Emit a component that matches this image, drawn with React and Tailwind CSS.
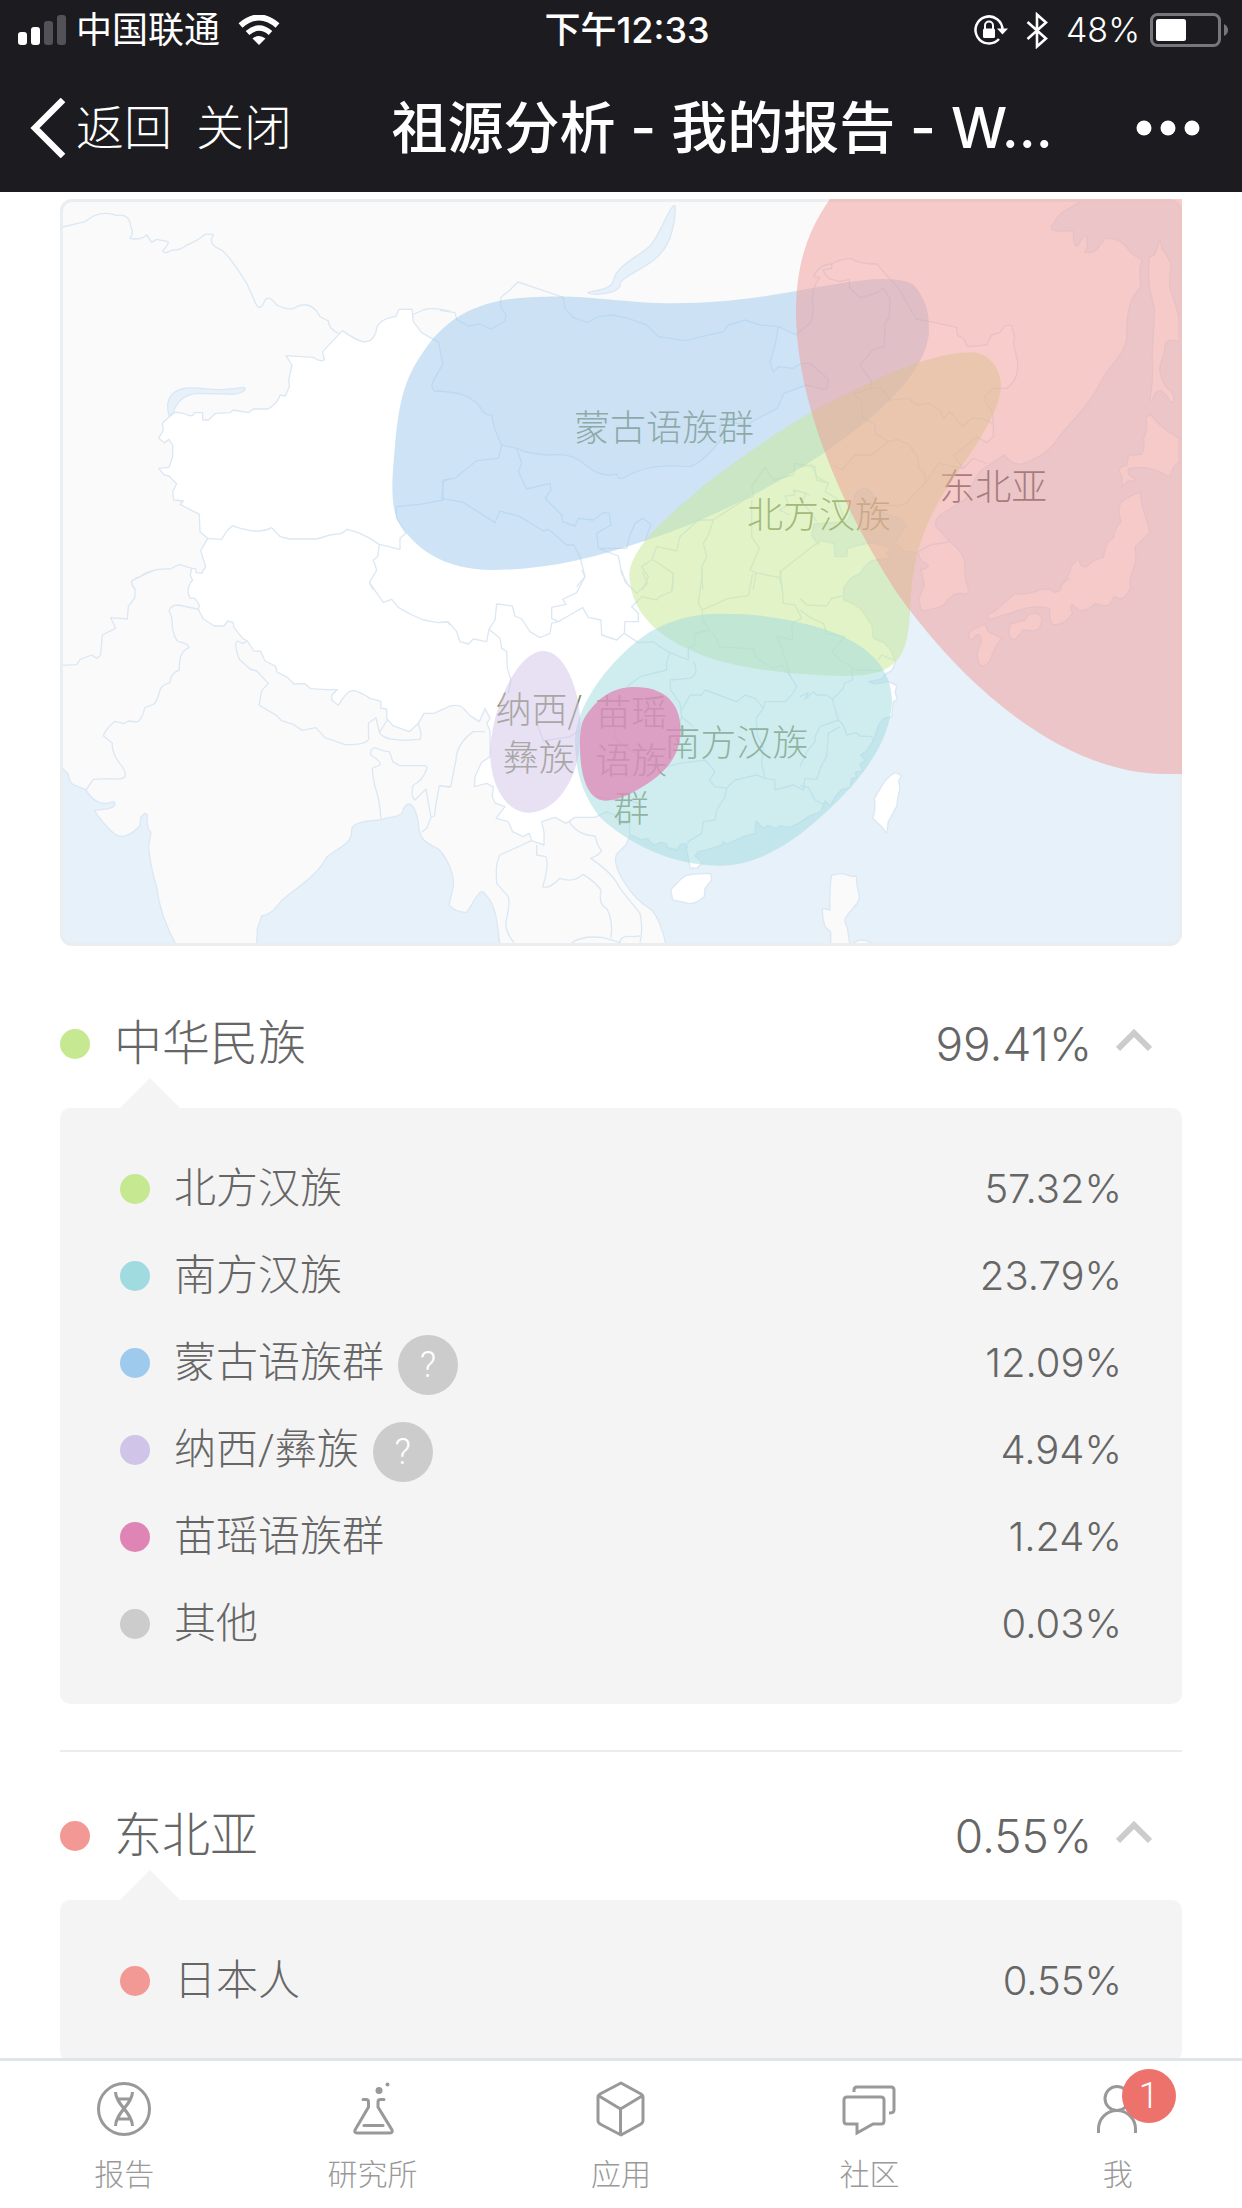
import React, { useState } from 'react';

const groups = [
  {
    id: 'china',
    name: '中华民族',
    percent: '99.41%',
    dot: 'bg-[#c6e891]',
    items: [
      { name: '北方汉族', percent: '57.32%', dot: 'bg-[#c6e891]' },
      { name: '南方汉族', percent: '23.79%', dot: 'bg-[#a0dcdf]' },
      { name: '蒙古语族群', percent: '12.09%', dot: 'bg-[#9ecaee]', help: true },
      { name: '纳西/彝族', percent: '4.94%', dot: 'bg-[#d0c4e8]', help: true },
      { name: '苗瑶语族群', percent: '1.24%', dot: 'bg-[#df85b5]' },
      { name: '其他', percent: '0.03%', dot: 'bg-[#cccccc]' },
    ],
  },
  {
    id: 'northeast-asia',
    name: '东北亚',
    percent: '0.55%',
    dot: 'bg-[#f29996]',
    items: [{ name: '日本人', percent: '0.55%', dot: 'bg-[#f29996]' }],
  },
];

// China's coast from the Vietnam border up to Liaodong, shared by the land and the China shapes
const COAST =
  'L1710 1908 L1724 1912 L1745 1923 L1762 1918 L1780 1938 L1800 1930 L1818 1933 L1822 1945 L1850 1953 L1862 1936 L1875 1933 L1882 1960 L1888 1993 L1890 2006 L1910 2008 L1920 1998 L1926 1990 L1905 1971 L1915 1958 L1940 1953 L1985 1938 L1990 1928 L2000 1935 L2050 1913 L2085 1903 L2088 1866 L2110 1888 L2124 1880 L2150 1888 L2160 1880 L2190 1885 L2220 1870 L2250 1850 L2282 1838 L2295 1805 L2310 1820 L2328 1790 L2345 1772 L2372 1765 L2374 1738 L2390 1735 L2386 1720 L2408 1715 L2400 1695 L2416 1685 L2402 1668 L2420 1655 L2440 1625 L2455 1580 L2468 1560 L2495 1553 L2500 1508 L2512 1501 L2505 1480 L2510 1460 L2485 1448 L2445 1455 L2425 1448 L2465 1440 L2475 1425 L2495 1415 L2507 1388 L2490 1350 L2470 1330 L2440 1318 L2436 1280 L2405 1233 Q2390 1218 2350 1202 L2352 1165 L2372 1138 L2400 1123 Q2425 1080 2450 1083 L2490 1078 L2480 1062 L2492 1048 Q2440 1025 2400 1038 L2362 1048 L2360 1073 L2325 1073 L2322 1034 L2280 1024 L2275 1036 L2255 1010 L2262 975 Q2330 970 2360 968 C2385 930 2370 890 2400 872 Q2425 855 2445 903 L2440 925';

const LAND =
  'M0 1700 L24 1724 Q28 1750 40 1757 L77 1772 Q105 1818 140 1813 L162 1808 Q170 1822 150 1828 L103 1835 Q125 1870 160 1902 Q192 1930 240 1880 L242 1855 Q258 1835 262 1850 Q258 1885 273 1900 L266 1943 Q270 2000 290 2065 Q300 2150 350 2241 L590 2241 L592 2190 L605 2151 C640 2145 650 2120 670 2100 C720 2060 770 2030 800 1975 C830 1945 878 1940 875 1890 C880 1868 930 1865 960 1863 C990 1850 1025 1860 1030 1830 C1045 1800 1065 1815 1075 1870 C1075 1930 1110 1935 1135 1950 C1165 1980 1190 2040 1177 2075 L1167 2118 Q1185 2140 1220 2140 C1240 2110 1260 2070 1270 2079 C1310 2120 1310 2160 1320 2241 L1818 2241 C1810 2190 1790 2150 1775 2133 C1720 2100 1700 2060 1690 2045 C1660 2000 1665 1970 1672 1963 L1698 1938 ' +
  COAST +
  ' Q2470 945 2520 958 Q2540 975 2537 983 L2505 1033 L2535 1058 L2575 1060 Q2578 1080 2586 1086 L2605 1098 Q2605 1108 2582 1113 Q2590 1140 2593 1158 L2577 1198 L2583 1235 Q2620 1232 2650 1218 Q2680 1180 2700 1183 Q2730 1190 2725 1170 Q2712 1130 2715 1093 Q2710 1060 2675 1033 L2630 985 Q2620 970 2640 948 L2720 898 Q2750 815 2780 803 L2832 768 Q2860 800 2885 795 C2960 770 2980 740 3000 710 C3060 640 3100 600 3125 543 C3160 490 3195 460 3200 420 C3200 330 3210 300 3242 263 L3240 205 Q3250 185 3242 180 C3190 160 3210 115 3130 118 Q3135 130 3120 135 Q3110 165 3075 160 L3082 145 L3080 108 Q3060 120 3055 138 Q3040 150 3040 95 C3000 98 2950 100 2985 68 C3000 30 3040 30 3070 0 L0 0 Z';

const CHINA =
  'M328 653 L307 673 L310 693 L296 718 L313 731 L327 721 L338 738 V773 L327 805 L296 808 L313 828 L327 831 L350 855 L338 878 L341 903 L370 906 L360 916 L418 946 L420 998 L443 1018 L422 1055 L437 1103 L425 1123 L408 1121 L407 1109 L395 1108 L391 1130 L398 1143 Q375 1170 390 1197 L405 1198 L418 1218 L415 1231 L430 1260 L463 1281 H492 L503 1266 L519 1270 L522 1285 L548 1318 L562 1326 L582 1356 L602 1357 L615 1386 L646 1401 L651 1419 L682 1435 L702 1455 L735 1454 L752 1469 L800 1472 L832 1472 L815 1488 V1502 L835 1519 Q860 1475 880 1474 Q900 1478 930 1498 L963 1507 L962 1527 L980 1530 V1558 L998 1580 L1048 1598 L1075 1573 L1092 1543 H1122 L1170 1521 Q1200 1515 1212 1530 L1230 1550 L1258 1568 L1275 1528 L1290 1558 L1280 1573 L1290 1595 L1290 1673 L1265 1690 L1245 1733 L1243 1763 L1280 1753 L1300 1763 L1297 1793 L1305 1812 L1335 1823 L1308 1858 L1345 1868 L1358 1898 L1390 1913 L1408 1903 L1415 1925 L1452 1938 L1452 1900 L1445 1868 L1485 1855 L1518 1873 L1545 1855 L1605 1855 L1640 1838 L1665 1848 L1680 1873 L1708 1873 ' +
  COAST +
  ' L2485 918 Q2540 925 2545 903 L2595 853 L2635 793 L2710 808 L2680 770 L2750 713 L2780 731 L2800 713 L2800 673 L2795 633 Q2770 610 2775 590 L2800 568 H2840 Q2880 540 2872 483 L2860 433 L2864 415 L2855 379 H2835 L2820 400 L2795 408 L2780 438 L2722 443 L2712 420 L2692 408 L2690 385 L2610 368 L2568 360 L2520 275 L2450 195 Q2400 195 2370 178 Q2340 180 2315 195 Q2280 195 2260 233 L2280 235 Q2250 270 2260 330 L2255 368 L2208 408 L2155 383 L2145 440 L2130 490 L2140 518 L2155 503 L2200 508 Q2220 490 2250 493 L2305 540 Q2305 575 2290 571 L2240 558 L2172 583 L2152 628 L2085 663 L2060 680 L1990 663 Q1970 690 1985 720 Q1920 800 1885 803 C1800 795 1740 805 1690 838 L1675 838 L1670 825 Q1640 835 1600 815 C1560 785 1540 760 1470 768 Q1400 765 1370 748 L1325 738 Q1300 690 1295 648 Q1270 650 1258 620 C1220 585 1200 580 1123 576 Q1110 565 1120 545 L1148 496 L1136 430 L1085 401 L1060 368 L1056 331 H1017 L1007 353 Q950 360 948 400 C930 450 890 425 847 395 L788 458 L793 483 Q780 490 760 475 L678 470 L696 498 L686 543 L688 563 L676 591 L660 588 Q655 610 625 630 H580 L565 641 L520 633 L510 641 L467 643 L445 663 L428 663 V641 H403 L398 650 L388 650 Q365 640 345 640 Z';

function OriginMap() {
  return (
    <svg viewBox="0 0 3366 2241" className="block w-full" role="img" aria-label="祖源分布">
      <defs>
        <clipPath id="frame">
          <rect width="3366" height="2241" rx="36" />
        </clipPath>
      </defs>
      <g clipPath="url(#frame)" stroke="#dbe8f4" strokeWidth="4" strokeLinejoin="round">
        <rect width="3366" height="2241" fill="#e6f1fa" stroke="none" />
        <path d={LAND} fill="#fafafa" />
        <path d={CHINA} fill="#ffffff" />

        {/* islands */}
        <g fill="#fafafa">
          <path d="M3300 118 L3306 150 Q3330 180 3334 200 Q3325 240 3332 275 Q3350 320 3357 358 V428 Q3320 415 3315 440 C3315 480 3295 490 3300 520 C3310 560 3325 570 3335 578 Q3350 615 3330 608 Q3300 550 3280 595 Q3275 615 3270 600 C3275 560 3282 540 3276 470 L3284 330 C3270 280 3262 260 3268 172 Q3285 175 3290 150 Z" />
          <path d="M3270 645 Q3300 685 3357 718 V793 Q3340 795 3332 830 L3325 833 Q3270 795 3205 810 Q3200 830 3228 840 Q3225 850 3205 845 L3185 863 Q3190 830 3178 820 Q3175 800 3200 800 L3205 770 L3245 765 Q3255 745 3250 720 Q3265 690 3257 658 Z" />
          <path d="M3240 878 C3250 960 3270 970 3268 1003 L3225 1043 Q3230 1080 3225 1095 Q3205 1150 3212 1165 C3200 1200 3180 1205 3162 1193 Q3150 1225 3130 1220 L3105 1213 Q3065 1255 3040 1218 Q3025 1215 3038 1243 Q3010 1285 2975 1275 Q2965 1250 2970 1228 Q2920 1215 2860 1240 L2785 1263 Q2780 1240 2800 1240 L2865 1183 Q2900 1190 2940 1172 L2972 1170 Q2985 1190 3003 1170 Q3000 1155 3028 1138 L3003 1158 Q3030 1130 3033 1105 Q3045 1085 3060 1081 Q3055 1105 3080 1103 Q3100 1080 3130 1075 Q3140 1020 3160 1018 Q3165 980 3183 968 C3160 900 3200 900 3240 878 Z" />
          <path d="M2925 1243 Q2955 1245 2940 1285 Q2930 1300 2890 1293 L2865 1323 Q2840 1320 2850 1275 L2895 1263 Q2900 1245 2925 1243 Z" />
          <path d="M2775 1275 L2785 1298 L2825 1318 Q2800 1350 2795 1373 Q2775 1420 2755 1390 Q2745 1360 2763 1333 C2765 1300 2750 1300 2735 1325 Q2715 1310 2735 1293 Z" />
          <path d="M2315 2028 L2345 2023 L2375 2032 L2390 2031 C2385 2070 2410 2090 2390 2115 C2360 2150 2345 2160 2362 2185 L2370 2241 H2312 V2198 L2295 2183 Q2285 2150 2288 2128 L2310 2133 Q2308 2060 2315 2028 Z" />
          <path d="M2372 2241 Q2405 2205 2445 2241 Z" />
        </g>
        <g fill="#ffffff">
          <path d="M2508 1721 L2525 1730 L2516 1745 L2520 1768 Q2512 1800 2510 1823 L2485 1868 L2480 1903 L2465 1883 L2438 1858 Q2448 1830 2443 1798 L2470 1753 Q2490 1725 2508 1721 Z" />
          <path d="M1865 2038 L1878 2030 L1900 2025 L1952 2023 L1955 2043 L1935 2068 L1933 2093 Q1900 2120 1880 2112 L1838 2103 L1832 2073 Z" />
        </g>

        {/* lakes */}
        <g fill="#e6f1fa">
          <path d="M328 653 C315 610 325 575 380 567 C450 565 450 580 550 565 Q565 570 540 582 Q525 588 500 585 L410 583 Q355 590 340 640 Z" />
          <path d="M1845 20 C1830 15 1800 110 1770 140 S1670 200 1662 240 S1590 272 1583 282 C1600 290 1670 285 1680 262 C1670 235 1780 200 1800 165 C1835 130 1848 60 1845 20 Z" />
        </g>

        <g fill="none">
          {/* central asia */}
          <g transform="translate(-30 -27)">
            <path d="M38 111 L105 95 L130 78 Q160 63 200 76 Q240 70 242 110 Q253 125 240 145 Q270 152 290 135 L305 157 L320 148 L355 155 Q355 165 338 182 Q345 195 365 180 Q390 182 410 165 Q440 155 465 133 Q500 130 487 140 Q475 165 515 180 C545 205 560 235 590 280 L615 335 Q628 370 643 335 Q655 310 680 345 Q720 365 740 350 Q785 330 810 380 L835 393 Q835 415 865 430" />
            <path d="M1086 375 L1120 360 Q1150 350 1200 364" />
            <path d="M470 1045 L515 1048 L530 1023 L547 1007 Q580 1020 620 1024 Q650 1022 665 1013 L690 1040 L720 1047 L800 1047 L840 1035 L875 1030 L892 1018 L925 1028 L960 1045 L988 1063 L1050 1078 L1050 1045 L1068 1030 L1040 985 L1038 950 L1110 943 L1180 930 L1178 875 L1200 866" />
            <path d="M988 1063 L983 1100 L970 1110 L980 1140 L958 1178 L970 1200" />
            <path d="M425 1135 L388 1123 L360 1137 Q300 1135 270 1160 Q240 1170 245 1182 L256 1200" />
          </g>
          {/* mongolia and the northern provinces */}
          <g transform="translate(1140 -27)">
            <path d="M0 361 L45 368 L50 388 L85 408 L120 402 L152 417 L195 395 L198 375 L182 350 L183 322 L210 300 L233 276 L300 298 L370 322 L375 355 L400 383 L443 397 L475 380 L520 375 L565 385 L620 405 L655 440 L735 452 L850 425 L865 405 L915 390 L960 405 L1015 410" />
            <path d="M185 765 L175 805 L110 812 L45 865 L10 870 L5 925 L70 937 L165 998 L180 963 L240 980 L310 1023 L325 1018 L380 1065 L402 1065 L420 1100 L435 1160 L410 1190" />
            <path d="M230 775 L245 820 L235 845 L260 897 L330 880 L333 900 L315 925 L365 975 L368 995 L405 1008 L415 985 L460 990 L490 968 L508 970 L513 1005 L470 1030 L475 1075 L560 1075 L568 1040 L585 1000 L608 985 L633 1003 L615 1052" />
            <path d="M475 1075 L535 1098 L545 1150 L568 1190" />
            <path d="M650 1070 L710 1083 L720 1040 L775 990 L820 990 L850 970 L920 925 L940 920 L935 890 L975 832 L1000 870 L1060 855 L1065 820 L1125 830 L1130 870 L1160 878" />
            <path d="M650 1070 L635 1110 L605 1130 L625 1160 L608 1200 M640 1110 L700 1150 L698 1200" />
            <path d="M820 990 L805 1035 L790 1060 L800 1100 L785 1130 L788 1200" />
            <path d="M935 930 L935 1040 L958 1075 L930 1140 L948 1148 L940 1200 M948 1148 L1018 1163 L1027 1140 L1130 1060 M1018 1163 L1028 1200" />
            <path d="M1060 900 L1100 910 L1085 935 L1115 970 L1130 995 M1060 900 L1065 915 L1035 918 L1045 945 L1018 960 L1050 975" />
          </g>
          {/* manchuria */}
          <g transform="translate(2220 -27)">
            <path d="M95 222 L95 235 L68 240 L85 265 L120 275 L148 268 L148 292 L180 323 L225 310 L250 295 L270 325 L268 380 L255 400 L253 470 L220 478 L180 525 L215 575 L213 595 L160 612 L187 635 L187 680 L225 705 L225 730 L265 755 L215 795 L165 795 L125 840 L100 825" />
            <path d="M213 595 L245 595 L270 630 L325 625 L350 645 L385 640 L420 660 L430 685 L450 665 L488 710 L515 685 L545 685 L578 700" />
            <path d="M265 755 L290 748 L325 762 L355 805 L355 835 L375 850 L375 880" />
            <path d="M490 835 L520 805 L560 820 M355 1085 L390 1065 L450 1055" />
            <path d="M0 830 L35 825 L50 860 L85 880 L75 905 L110 925 L130 980 M0 905 L30 915" />
          </g>
          {/* south asia */}
          <g transform="translate(-30 1113)">
            <path d="M315 0 L275 18 L246 32 Q243 45 255 58 V82 L235 110 L232 147 L182 143 L197 175 L157 195 L152 255 L140 265 L125 255 L90 268 L80 284 L38 286" />
            <path d="M445 118 Q410 110 385 105 Q360 105 357 124 Q367 135 367 170 Q372 205 385 215 Q415 220 417 233 Q385 245 388 300 Q360 310 360 338 Q335 345 330 360 Q320 400 310 403 L285 413 Q275 450 262 456 L235 453 L222 461 L195 454 Q165 480 160 497 L187 520 Q185 545 205 575 Q235 610 222 623 Q210 630 180 626 L130 628 L108 660" />
            <path d="M592 213 L578 220 L562 213 Q550 220 568 268 L600 297 L620 303 L655 340 L635 362 L627 405 L680 437 L695 452 L730 463 L757 481 L797 473 L825 503 L885 524 Q950 525 956 507 L955 460 L978 443 L988 487 L1012 450" />
            <path d="M988 487 Q995 500 1020 507 L1060 511 L1110 508 Q1118 495 1105 463" />
            <path d="M993 748 Q990 690 975 650 Q965 600 968 594 L990 585 Q995 575 962 555 Q960 535 975 533 Q1000 545 1018 545 Q1025 560 1028 575 L1048 587 H1125 Q1135 590 1128 602 Q1115 635 1090 645 Q1080 680 1095 690 L1128 657 L1143 742 L1153 738 L1160 690 L1168 647 L1200 652" />
            <path d="M1143 742 L1130 775 L1115 787" />
            <path d="M958 38 L1000 97 L1025 88 L1045 112 L1080 132 L1120 150 L1165 158 L1192 155 L1200 165" />
          </g>
          {/* southwest china and indochina */}
          <g transform="translate(1140 1113)">
            <path d="M0 158 L25 155 L50 185 L60 215 L85 222 L100 207 L140 215 L147 178 L165 150 L170 102 L217 108 L225 138 L245 147 L270 185 L300 203 L330 190 L335 160 L355 155 L335 145 L335 112 L378 103 L368 88 L410 68 L435 20 L425 0" />
            <path d="M355 155 L395 132 L428 113 L445 142 L483 150 L485 195 L530 210 L553 190 L555 155 L595 155 L595 130 L575 110 L605 80 L650 90 L658 80 L695 65 L700 10" />
            <path d="M545 0 L555 35 L590 70 L623 40 L608 5" />
            <path d="M147 178 L180 205 L185 235 L200 245 L202 295 L213 330 L205 370" />
            <path d="M290 455 L310 513 L390 500 L420 480" />
            <path d="M553 190 L595 218 L640 215 L660 230 L690 248 L745 270 L745 235 L765 225 L763 192 L808 180 L788 150 L787 120 L775 100 L788 0" />
            <path d="M787 120 L865 85 L925 77 L938 10 M760 275 Q780 310 750 325 L690 330 L692 360 L720 400 L725 440 L715 480" />
            <path d="M690 248 L680 275 L680 300 L600 320 L560 350" />
            <path d="M808 180 L830 205 L838 230 L940 237 L950 265 L1000 295 L1025 285 L1052 320 L1070 350 L1055 375 L1035 395 L975 395 L970 415 L945 385 L915 375 L890 395 L795 360 L785 375 L750 375 L725 420" />
            <path d="M1052 320 L1025 230 L1010 200 L1058 210 L1055 160 L1085 145 L1065 105 L1030 100 L1028 70 L1020 0" />
            <path d="M970 415 L948 445 L953 500 L970 530 L965 580 L975 625 L1005 630 L1005 660 L1060 645 L1090 660 L1095 625 L1130 628 L1145 585 L1160 560 L1165 490 L1200 470" />
            <path d="M725 440 L760 470 M530 470 L520 500 L555 530 L600 560 L680 590 L720 580 L795 570 L825 605 L808 630 L825 650 L860 655 L885 630 L950 615 L975 625" />
            <path d="M860 655 L855 680 L830 720 L825 750 L790 755 L785 790 L745 815 L740 835" />
            <path d="M470 680 L520 690 L560 690 L600 700" />
            <path d="M135 485 L100 485 Q50 520 48 570 L32 650 L0 648" />
            <path d="M275 812 L180 855 Q165 880 170 940 L205 980 Q210 1000 200 1045 Q190 1080 222 1118" />
            <path d="M290 825 V855 L318 860 Q328 890 308 950 Q325 960 360 925 Q400 940 430 913 Q470 940 483 960 Q475 1005 500 1015 Q520 1050 513 1105" />
            <path d="M388 755 Q410 795 465 798 Q475 835 485 840 Q480 855 452 865 Q520 910 540 955 L600 1030 Q610 1080 600 1118" />
            <path d="M395 1118 Q430 1095 490 1103 L540 1118 Q540 1095 580 1100 L600 1098" />
          </g>
          {/* east coast provinces */}
          <g transform="translate(2220 1113)">
            <path d="M0 85 L20 105 L80 108 L95 85 L130 78 M0 120 L35 145 L70 160 L80 190 L135 200 L120 215 L95 245 L120 270 L155 290 L165 300 L205 300 L245 303 M235 270 L245 255 L285 272" />
            <path d="M155 295 L158 330 L132 340 L130 355 L97 388 L80 375 L50 375 L40 365 L15 388 L25 368 L0 380" />
            <path d="M97 388 L115 450 L60 470 L45 500 L45 515 L20 545 L0 590 M115 450 L130 465 L140 495 L170 488 L180 498 L215 500 L220 510" />
            <path d="M0 647 L25 652 L45 690 L75 705" />
          </g>
        </g>
      </g>
      <rect x="4.5" y="4.5" width="3357" height="2232" rx="33" fill="none" stroke="#eaeef1" strokeWidth="9" />

      <g fill="#7f8a62" fontSize="108" fontWeight="300" textAnchor="middle" className="font-['Noto_Sans_CJK_SC',sans-serif]">
        <text x="1812" y="726">蒙古语族群</text>
        <text x="2277" y="987">北方汉族</text>
        <text x="2800" y="902" fill="#5a5f62">东北亚</text>
        <text x="2029" y="1670">南方汉族</text>
        <text x="1436" y="1573">纳西/</text>
        <text x="1436" y="1717">彝族</text>
        <text x="1714" y="1582">苗瑶</text>
        <text x="1714" y="1726">语族</text>
        <text x="1714" y="1870">群</text>
      </g>

      {/* ancestry regions */}
      <path fill="#9ecaee" fillOpacity="0.5" d="M1460 293 C1600 290 1700 313 1840 313 C2100 313 2250 258 2440 241 Q2535 236 2565 262 C2605 315 2607 350 2607 400 C2600 500 2500 620 2290 763 C2100 890 1900 980 1755 1025 C1600 1078 1450 1113 1300 1113 C1150 1113 1060 1050 1010 958 C990 900 997 830 1005 740 C1020 570 1045 520 1110 430 C1190 330 1300 293 1460 293 Z" />
      <path fill="#c6e891" fillOpacity="0.5" d="M1708 1123 Q1710 1085 1755 1025 C1800 970 1850 930 1940 853 C2100 730 2250 635 2340 595 C2430 550 2600 462 2730 460 C2790 460 2822 510 2823 560 C2820 660 2700 800 2640 900 C2590 990 2555 1080 2550 1233 C2545 1390 2500 1431 2350 1431 C2230 1431 2000 1410 1890 1353 C1770 1300 1708 1220 1708 1123 Z" />
      <path fill="#a0dcdf" fillOpacity="0.5" d="M1980 1244 C2070 1244 2140 1252 2220 1271 C2400 1310 2496 1390 2496 1508 C2490 1640 2390 1770 2220 1906 C2130 1970 2060 2000 1980 2000 C1830 2000 1700 1930 1620 1855 C1560 1780 1545 1700 1545 1623 C1550 1500 1680 1350 1780 1293 Q1870 1244 1980 1244 Z" />
      <path fill="#d0c4e8" fillOpacity="0.5" d="M1450 1356 C1510 1356 1562 1463 1562 1593 C1562 1753 1480 1841 1405 1841 C1340 1841 1290 1763 1290 1653 C1300 1503 1380 1356 1450 1356 Z" />
      <path fill="#df85b5" fillOpacity="0.75" d="M1725 1464 C1810 1464 1862 1510 1862 1593 C1862 1683 1800 1733 1740 1768 C1690 1798 1660 1805 1635 1805 C1580 1803 1560 1723 1560 1643 C1560 1583 1565 1563 1590 1533 C1630 1483 1670 1464 1725 1464 Z" />
      <path fill="#f29996" fillOpacity="0.5" d="M2310 0 C2240 100 2208 200 2208 343 C2210 600 2330 900 2505 1173 C2700 1450 3000 1725 3320 1725 H3366 V0 Z" />
    </svg>
  );
}

function StatusBar() {
  return (
    <div className="grid h-[60px] grid-cols-3 items-center pl-[18px] pr-[14px] text-[36px] leading-none">
      <div className="flex items-center gap-[10px]">
        <svg className="h-[30px] w-12" viewBox="0 0 48 30" fill="#fff" aria-hidden="true">
          <rect x="0" y="17" width="9" height="13" rx="3" />
          <rect x="13" y="12" width="9" height="18" rx="3" />
          <rect x="26" y="6" width="9" height="24" rx="3" fill="#535258" />
          <rect x="39" y="0" width="9" height="30" rx="3" fill="#535258" />
        </svg>
        <span className="whitespace-nowrap">中国联通</span>
        <svg className="ml-2 h-[30px] w-[42px]" viewBox="0 0 42 30" aria-hidden="true">
          <path d="M2.5 10.5 Q21 -5.5 39.5 10.5" fill="none" stroke="#fff" strokeWidth="6" />
          <path d="M9.5 18 Q21 8 32.5 18" fill="none" stroke="#fff" strokeWidth="5.5" />
          <path d="M14.5 23.5 Q21 18.5 27.5 23.5 L21 30 Z" fill="#fff" />
        </svg>
      </div>
      <div className="whitespace-nowrap pl-2 text-center font-medium">下午12:33</div>
      <div className="flex items-center justify-end gap-[10px]">
        <svg className="mr-2 h-[36px] w-[36px]" viewBox="0 0 36 36" aria-hidden="true">
          <path d="M30.5 18 A13.5 13.5 0 1 0 27 27" fill="none" stroke="#fff" strokeWidth="2.5" />
          <path d="M25 16.5 H36 L30.5 22.5 Z" fill="#fff" />
          <rect x="11" y="16.5" width="12" height="9.5" rx="1.5" fill="#fff" />
          <path d="M13 17 V13.5 A4 4 0 0 1 21 13.5 V17" fill="none" stroke="#fff" strokeWidth="2" />
        </svg>
        <svg className="mr-2 h-[37px] w-[22px]" viewBox="0 0 22 37" fill="none" stroke="#fff" strokeWidth="2.6" aria-hidden="true">
          <path d="M1.5 10 L20 26.5 L11 34.5 V2.5 L20 10.5 L1.5 27" />
        </svg>
        <span className="text-[34px] font-light">48%</span>
        <svg className="h-[34px] w-[78px]" viewBox="0 0 78 34" aria-hidden="true">
          <rect x="1.5" y="1.5" width="68" height="31" rx="6" fill="none" stroke="#77767a" strokeWidth="3" />
          <rect x="6" y="6" width="30" height="22" rx="2.5" fill="#fff" />
          <path d="M74 11 Q78 13 78 17 T74 23 Z" fill="#77767a" />
        </svg>
      </div>
    </div>
  );
}

function TitleBar() {
  return (
    <div className="flex h-[132px] items-center pl-[30px] pr-[42px] pt-1">
      <button type="button" className="flex items-center gap-[10px] text-[48px] font-light">
        <svg className="h-[60px] w-9" viewBox="0 0 36 60" fill="none" stroke="#fff" strokeWidth="6.5" aria-hidden="true">
          <path d="M33 2 L5 30 L33 58" />
        </svg>
        返回
      </button>
      <button type="button" className="ml-6 text-[48px] font-light">关闭</button>
      <h1 className="flex-1 truncate pl-4 text-center text-[56px] font-medium">祖源分析 - 我的报告 - W...</h1>
      <button type="button" aria-label="更多">
        <svg className="h-4 w-[64px]" viewBox="0 0 64 16" fill="#fff" aria-hidden="true">
          <circle cx="8" cy="8" r="7.5" />
          <circle cx="32" cy="8" r="7.5" />
          <circle cx="56" cy="8" r="7.5" />
        </svg>
      </button>
    </div>
  );
}

function GroupSection({ group }) {
  const [open, setOpen] = useState(true);

  return (
    <section>
      <button
        type="button"
        aria-expanded={open}
        onClick={() => setOpen(!open)}
        className="relative flex h-32 w-full items-center pr-[30px] text-[48px]"
      >
        <span className={`h-[30px] w-[30px] rounded-full ${group.dot}`}></span>
        <span className="ml-6">{group.name}</span>
        <span className="ml-auto font-['Inter',sans-serif] text-[46px]">{group.percent}</span>
        <svg className="mb-2 ml-6 h-6 w-9" viewBox="0 0 36 24" fill="none" stroke="#cccccc" strokeWidth="6" aria-hidden="true">
          <path d={open ? 'M2 21 L18 5 L34 21' : 'M2 3 L18 19 L34 3'} />
        </svg>
        {open && (
          <svg className="absolute bottom-0 left-[60px] h-[30px] w-[60px]" viewBox="0 0 60 30" fill="#f4f4f4" aria-hidden="true">
            <path d="M0 30 L30 0 L60 30 Z" />
          </svg>
        )}
      </button>
      {open && (
        <ul className="rounded-[10px] bg-[#f4f4f4] px-[60px] py-[37px] text-[42px]">
          {group.items.map((item) => (
            <li key={item.name} className="flex h-[87px] items-center">
              <span className={`h-[30px] w-[30px] rounded-full ${item.dot}`}></span>
              <span className="ml-6">{item.name}</span>
              {item.help && (
                <button
                  type="button"
                  aria-label={`${item.name}说明`}
                  className="ml-[14px] mt-1 flex h-[60px] w-[60px] items-center justify-center rounded-full bg-[#cccccc] text-[36px] text-white"
                >
                  ?
                </button>
              )}
              <span className="ml-auto font-['Inter',sans-serif] text-[40px]">{item.percent}</span>
            </li>
          ))}
        </ul>
      )}
    </section>
  );
}

const tabs = [
  {
    label: '报告',
    icon: (
      <>
        <circle cx="30" cy="30" r="25.5" />
        <path d="M21.5 13 C21.5 25 38.5 34 38.5 47 M38.5 13 C38.5 25 21.5 34 21.5 47 M23 20 H37 M23 40 H37" />
      </>
    ),
  },
  {
    label: '研究所',
    icon: (
      <>
        <path d="M20 20.5 H23 Q25.5 20.5 25.5 23 V28 L12 51 Q11 54 14 54 H47 Q50 54 49 51 L35 28 V23 Q35 20.5 37.5 20.5 H41" strokeLinecap="round" />
        <path d="M21 46.5 H40" strokeLinecap="round" />
        <circle cx="36" cy="11.5" r="3.5" fill="#999999" stroke="none" />
        <circle cx="44.5" cy="5.5" r="2" fill="#999999" stroke="none" />
      </>
    ),
  },
  {
    label: '应用',
    icon: (
      <path
        d="M30 4 L50 15 Q52 16.5 52 18 V42 Q52 43.5 50 45 L30 56 L9 45 Q7 43.5 7 42 V18 Q7 16.5 9 15 Z M8 17 L29.5 30 L51 17 M29.5 30 V56"
        strokeLinejoin="round"
      />
    ),
  },
  {
    label: '社区',
    icon: (
      <>
        <path d="M8 18 H42 Q45 18 45 21 V42 Q45 45 42 45 H34 L18 54 V45 H8 Q5 45 5 42 V21 Q5 18 8 18 Z" />
        <path d="M15 13 V11 Q15 8 18 8 H52 Q55 8 55 11 V31 Q55 34 50 34" />
      </>
    ),
  },
  {
    label: '我',
    badge: 1,
    icon: (
      <>
        <circle cx="29" cy="19.5" r="12" />
        <path d="M10.5 54 V50 A18.5 18.5 0 0 1 47.5 50 V54" />
      </>
    ),
  },
];

function TabBar() {
  return (
    <nav className="fixed inset-x-0 bottom-0 grid h-[150px] grid-cols-5 border-t-[3px] border-[#e0e5e8] bg-white">
      {tabs.map((tab) => (
        <a key={tab.label} href="#" className="flex flex-col items-center pt-[18px] text-[30px] text-[#999999]">
          <span className="relative">
            <svg className="h-[60px] w-[60px]" viewBox="0 0 60 60" fill="none" stroke="#999999" strokeWidth="3" aria-hidden="true">
              {tab.icon}
            </svg>
            {tab.badge && (
              <span className="absolute -right-7 -top-[10px] flex h-[54px] w-[54px] items-center justify-center rounded-full bg-[#ee726c] text-[36px] text-white">
                {tab.badge}
              </span>
            )}
          </span>
          <span className="mt-3 leading-[48px]">{tab.label}</span>
        </a>
      ))}
    </nav>
  );
}

function App() {
  return (
    <div className="min-h-screen bg-white font-['Roboto','Noto_Sans_CJK_SC',sans-serif] font-light text-[#666666]">
      <header className="bg-[#1c1b20] font-['Inter','Noto_Sans_CJK_SC',sans-serif] font-normal text-white">
        <StatusBar />
        <TitleBar />
      </header>
      <main className="px-[60px] pb-36 pt-[7px]">
        <OriginMap />
        <div className="mt-[34px]">
          <GroupSection group={groups[0]} />
        </div>
        <div className="mt-[46px] border-t-2 border-[#ececec] pt-5">
          <GroupSection group={groups[1]} />
        </div>
      </main>
      <TabBar />
    </div>
  );
}

export default App;
